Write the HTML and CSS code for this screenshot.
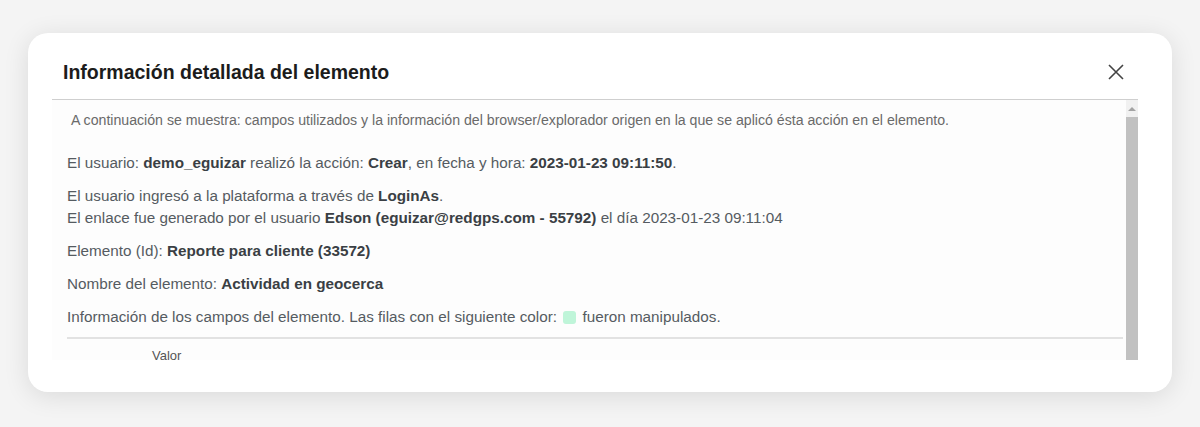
FILE: index.html
```html
<!DOCTYPE html>
<html>
<head>
  <meta charset="utf-8">
  <title>Información detallada del elemento</title>
  <link rel="stylesheet" href="styles.css">
</head>
<body>

<div class="modal">
  <div class="modal-header">
    <h1 class="modal-title">Información detallada del elemento</h1>
    <span class="close">
      <svg width="16" height="16" viewBox="0 0 16 16"><path d="M1 1 L15 15 M15 1 L1 15" stroke="#444" stroke-width="1.6" fill="none"/></svg>
    </span>
  </div>

  <div class="modal-body">
    <div class="scroll">
      <p class="intro">A continuación se muestra: campos utilizados y la información del browser/explorador origen en la que se aplicó ésta acción en el elemento.</p>

      <p>El usuario: <b>demo_eguizar</b> realizó la acción: <b>Crear</b>, en fecha y hora: <b>2023-01-23 09:11:50</b>.</p>
      <p>El usuario ingresó a la plataforma a través de <b>LoginAs</b>.<br>
      El enlace fue generado por el usuario <b>Edson (eguizar@redgps.com - 55792)</b> el día 2023-01-23 09:11:04</p>
      <p>Elemento (Id): <b>Reporte para cliente (33572)</b></p>
      <p>Nombre del elemento: <b>Actividad en geocerca</b></p>
      <p>Información de los campos del elemento. Las filas con el siguiente color: <span class="swatch"></span> fueron manipulados.</p>

      <div class="fields">
        <div class="fields-head">
          <span class="col-name"></span>
          <span class="col-value">Valor</span>
        </div>
      </div>
    </div>
    <div class="scrollbar">
      <div class="arrow-up"></div>
      <div class="thumb"></div>
    </div>
  </div>
</div>

</body>
</html>
```

FILE: styles.css
```css
body {
  margin: 0;
  padding: 33px 28px 35px 28px;
  background: #f4f4f4;
  font-family: "Liberation Sans", Arial, sans-serif;
}

.modal {
  height: 359px;
  background: #ffffff;
  border-radius: 20px;
  box-shadow: 0 4px 26px rgba(0, 0, 0, 0.11);
  padding: 0 34px 0 24px;
  box-sizing: border-box;
}

.modal-header {
  display: flex;
  align-items: center;
  justify-content: space-between;
  height: 67px;
  padding-left: 11px;
  padding-right: 14px;
  border-bottom: 1px solid #cfcfcf;
  box-sizing: border-box;
}

.modal-title {
  margin: 0;
  padding-top: 12px;
  font-size: 19.5px;
  font-weight: bold;
  color: #1c1c1c;
}

.close {
  display: flex;
  padding-top: 11px;
}

.modal-body {
  display: flex;
  height: 260px;
  background: #fdfdfd;
}

.scroll {
  flex: 1;
  padding: 11px 3px 0 15px;
}

.scroll p {
  margin: 0 0 11px 0;
  font-size: 15.25px;
  line-height: 22px;
  color: #555b61;
}

.scroll b {
  color: #3a3f44;
}

.scroll p.intro {
  margin: 0 0 23px 4px;
  font-size: 14.15px;
  line-height: 18px;
  color: #6a6a6a;
}

.swatch {
  display: inline-block;
  width: 13px;
  height: 13px;
  border-radius: 3px;
  background: #bff5d9;
  vertical-align: -2px;
  margin: 0 2px;
}

.fields {
  margin-top: -2px;
  border-top: 2px solid #e2e2e2;
}

.fields-head {
  display: flex;
  padding-top: 9px;
  font-size: 13px;
  line-height: 15px;
  color: #555;
}

.col-name {
  width: 85px;
}

.scrollbar {
  width: 12px;
  display: flex;
  flex-direction: column;
}

.arrow-up {
  height: 17px;
  background: #f1f1f1;
  position: relative;
}

.arrow-up::after {
  content: "";
  position: absolute;
  left: 2px;
  top: 7px;
  border-left: 4px solid transparent;
  border-right: 4px solid transparent;
  border-bottom: 4px solid #a3a3a3;
}

.thumb {
  flex: 1;
  background: #c1c1c1;
}
```
